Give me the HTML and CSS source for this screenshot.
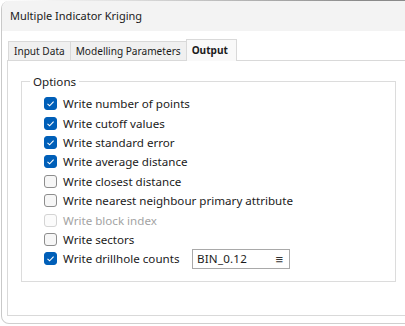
FILE: index.html
```html
<!DOCTYPE html>
<html>
<head>
<meta charset="utf-8">
<link rel="stylesheet" href="styles.css">
</head>
<body>
<div class="desk-top"></div>
<div class="window">
  <div class="titlebar">Multiple Indicator Kriging</div>
  <div class="content">
    <div class="tabs">
      <div class="tab">Input Data</div>
      <div class="tab">Modelling Parameters</div>
      <div class="tab active">Output</div>
    </div>
    <div class="panel">
      <fieldset class="group">
        <legend>Options</legend>
        <div class="row"><span class="cb checked"><svg viewBox="0 0 13 13"><path d="M3.5 6.8 L5.6 8.8 L9.6 4.6" fill="none" stroke="#fff" stroke-width="1.1"/></svg></span><span class="lbl">Write number of points</span></div>
        <div class="row"><span class="cb checked"><svg viewBox="0 0 13 13"><path d="M3.5 6.8 L5.6 8.8 L9.6 4.6" fill="none" stroke="#fff" stroke-width="1.1"/></svg></span><span class="lbl">Write cutoff values</span></div>
        <div class="row"><span class="cb checked"><svg viewBox="0 0 13 13"><path d="M3.5 6.8 L5.6 8.8 L9.6 4.6" fill="none" stroke="#fff" stroke-width="1.1"/></svg></span><span class="lbl">Write standard error</span></div>
        <div class="row"><span class="cb checked"><svg viewBox="0 0 13 13"><path d="M3.5 6.8 L5.6 8.8 L9.6 4.6" fill="none" stroke="#fff" stroke-width="1.1"/></svg></span><span class="lbl">Write average distance</span></div>
        <div class="row"><span class="cb"></span><span class="lbl">Write closest distance</span></div>
        <div class="row"><span class="cb"></span><span class="lbl">Write nearest neighbour primary attribute</span></div>
        <div class="row disabled"><span class="cb"></span><span class="lbl">Write block index</span></div>
        <div class="row"><span class="cb"></span><span class="lbl">Write sectors</span></div>
        <div class="row"><span class="cb checked"><svg viewBox="0 0 13 13"><path d="M3.5 6.8 L5.6 8.8 L9.6 4.6" fill="none" stroke="#fff" stroke-width="1.1"/></svg></span><span class="lbl fixed">Write drillhole counts</span>
          <div class="field"><span class="val">BIN_0.12</span><span class="menu">≡</span></div>
        </div>
      </fieldset>
    </div>
  </div>
</div>
</body>
</html>
```

FILE: styles.css
```css
html, body {
  margin: 0;
  padding: 0;
  background: #ffffff;
}
body {
  width: 405px;
  height: 326px;
  overflow: hidden;
  font-family: "Noto Sans", "Open Sans", sans-serif;
  font-size: 11.6px;
  color: #1b1b1b;
}
.desk-top {
  height: 1px;
  background: linear-gradient(to right, #ffffff 0, #e0e0e0 120px, #8a8a8a 360px);
}
.window {
  margin-left: 1px;
  height: 323px;
  box-sizing: border-box;
  border-left: 1px solid #c9c9c9;
  border-bottom: 1px solid #cfcfcf;
  border-radius: 8px 0 0 8px;
  overflow: hidden;
  background: #ffffff;
}
.titlebar {
  height: 30px;
  line-height: 30px;
  padding-left: 8px;
  background: #f3f3f3;
  color: #1a1a1a;
  font-size: 11px;
}
.content {
  padding: 7px 0 0 5px;
}
.tabs {
  display: flex;
  align-items: flex-end;
  height: 22px;
  padding-left: 1px;
  font-size: 10.1px;
}
.tab {
  height: 18px;
  line-height: 18px;
  padding: 0 5px 0 5px;
  background: #f0f0f0;
  border: 1px solid #d9d9d9;
  border-bottom: none;
  border-right: none;
  color: #1b1b1b;
}
.tab.active {
  height: 21px;
  line-height: 20px;
  font-weight: bold;
  background: #f9f9f9;
  border-right: 1px solid #d9d9d9;
  margin-bottom: -1px;
  position: relative;
  z-index: 1;
  padding: 0 8px 0 5px;
}
.panel {
  height: 256px;
  box-sizing: border-box;
  border: 1px solid #d9d9d9;
  border-right: none;
  padding: 13px 9px 0 13px;
}
.group {
  margin: 0;
  border: 1px solid #dcdcdc;
  padding: 5px 8px 0 22px;
  height: 208px;
  box-sizing: border-box;
}
.group legend {
  padding: 0 3px;
  margin-left: -14px;
  color: #1b1b1b;
}
.row {
  display: flex;
  align-items: center;
  height: 19.4px;
  gap: 6px;
}
.cb {
  width: 13px;
  height: 13px;
  box-sizing: border-box;
  border: 1px solid #8d8d8d;
  border-radius: 3px;
  background: #f6f6f6;
  flex: none;
}
.cb svg {
  display: block;
  width: 13px;
  height: 13px;
  margin: -1px;
}
.cb.checked {
  background: #005fb8;
  border-color: #005fb8;
}
.row.disabled .cb {
  border-color: #d4d4d4;
  background: #fbfbfb;
}
.row.disabled .lbl {
  color: #a3a3a3;
}
.lbl.fixed {
  width: 123px;
  flex: none;
}
.field {
  width: 98px;
  height: 20px;
  flex: none;
  box-sizing: border-box;
  border: 1px solid #a9a9a9;
  display: flex;
  align-items: center;
  justify-content: space-between;
  padding: 0 6px 0 4px;
  background: #ffffff;
}
.val {
  letter-spacing: 0.2px;
}
.menu {
  font-size: 13px;
  color: #333;
}
```
